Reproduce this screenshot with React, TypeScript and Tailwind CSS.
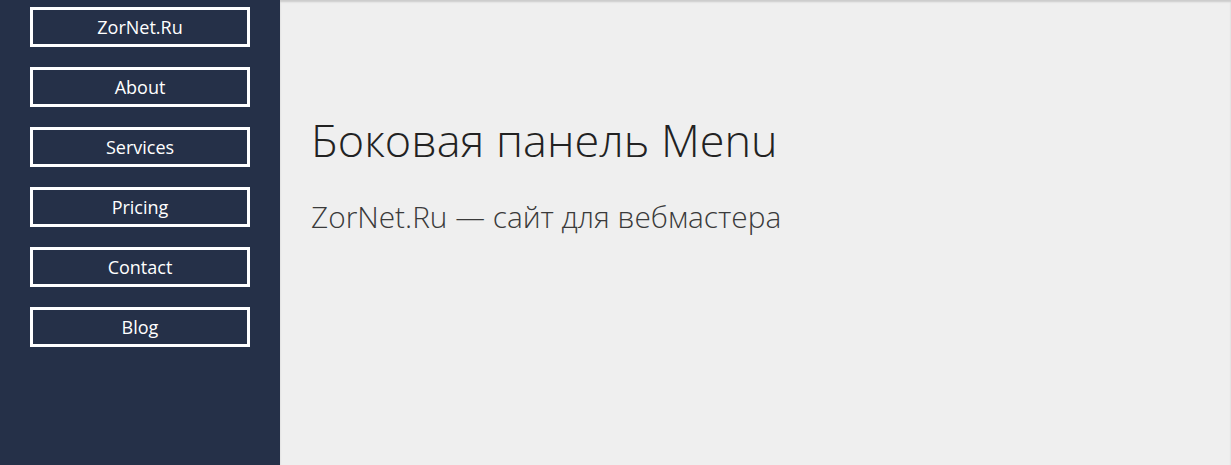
export default function App() {
  const items = ["ZorNet.Ru", "About", "Services", "Pricing", "Contact", "Blog"];
  return (
    <div className="flex h-[465px] w-full" style={{ fontFamily: '"Open Sans", sans-serif' }}>
      <aside className="w-[280px] shrink-0 bg-[#253048] pt-[7px]">
        <nav className="flex flex-col items-center gap-[20px]">
          {items.map((t) => (
            <a
              key={t}
              className="flex h-[40px] w-[220px] items-center justify-center border-[3px] border-white text-[18px] leading-none text-white"
            >
              {t}
            </a>
          ))}
        </nav>
      </aside>
      <main className="flex-1 bg-[#efefef] pl-[31px] pt-[112px] shadow-[inset_0_2px_2px_rgba(0,0,0,0.15)]">
        <h1 className="text-[45px] font-light leading-[56px] text-[#222]">Боковая панель Menu</h1>
        <p className="mt-[31px] text-[29.8px] font-light leading-[36px] text-[#3a3a3a]">ZorNet.Ru — сайт для вебмастера</p>
      </main>
    </div>
  );
}
